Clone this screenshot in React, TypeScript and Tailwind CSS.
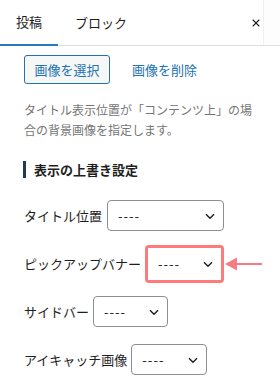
import { X } from "lucide-react";

const Chevron = () => (
  <svg width="12" height="12" viewBox="0 0 12 12" fill="none" stroke="#1e1e1e" strokeWidth="1.4">
    <path d="M2 4.2 L6 8.2 L10 4.2" />
  </svg>
);

const Select = ({ width, bordered = true }: { width: string; bordered?: boolean }) => (
  <div
    className={`${width} ${
      bordered ? "h-[31px] border border-[#8c8f94] rounded-[4px]" : "h-[32px]"
    } flex items-center justify-between pl-[10px] pr-[7px] bg-white`}
  >
    <span className="text-[13px] text-[#1e1e1e] tracking-[1px]">----</span>
    <Chevron />
  </div>
);

const App = () => {
  return (
    <div
      className="w-[280px] h-[385px] bg-white overflow-hidden text-[#1e1e1e]"
      style={{ fontFamily: '"Noto Sans CJK JP", "Noto Sans", sans-serif' }}
    >
      {/* Tabs */}
      <div className="flex h-[46px] border-b border-[#e0e0e0]">
        <div className="w-[58px] -mb-px border-b-2 border-[#2a78c0] flex items-center justify-center text-[13px]">
          投稿
        </div>
        <div className="pl-[17px] flex items-center text-[13px]">ブロック</div>
        <div className="flex-1" />
        <div className="w-[14px] flex items-center justify-center">
          <X className="w-[12px] h-[12px]" strokeWidth={2.2} />
        </div>
        <div className="w-[17px] border-l border-[#f0f0f0] bg-[#fdfdfd]" />
      </div>

      <div className="pl-[24px]">
        {/* Image buttons */}
        <div className="flex items-center mt-[9px]">
          <button className="w-[86px] h-[29px] border border-[#2271b1] rounded-[3px] bg-[#f6f7f7] text-[13px] text-[#2271b1]">
            画像を選択
          </button>
          <span className="ml-[22px] text-[13px] text-[#2271b1]">画像を削除</span>
        </div>

        {/* Description */}
        <p className="mt-[16px] w-[245px] text-[12px] leading-[20px] text-[#757575]">
          タイトル表示位置が「コンテンツ上」の場
          <br />
          合の背景画像を指定します。
        </p>

        {/* Heading */}
        <div className="mt-[21px] -ml-px border-l-[3px] border-[#1d3b52] pl-[8px] h-[17px] flex items-center text-[13px] font-bold">
          表示の上書き設定
        </div>

        {/* Override rows */}
        <div className="mt-[22px] flex items-center gap-[5px] text-[13px]">
          <span>タイトル位置</span>
          <Select width="w-[117px]" />
        </div>

        <div className="mt-[14px] flex items-center text-[13px]">
          <span>ピックアップバナー</span>
          <div className="ml-[4px] border-[3px] border-[#ff7b7b] rounded-[4px]">
            <Select width="w-[73px]" bordered={false} />
          </div>
          <svg width="38" height="16" viewBox="0 0 38 16" className="ml-[1px]">
            <path d="M0 8 L12 1.5 L12 14.5 Z" fill="#f77b84" />
            <rect x="10" y="7" width="27" height="2" fill="#f77b84" />
          </svg>
        </div>

        <div className="mt-[13px] flex items-center gap-[4px] text-[13px]">
          <span>サイドバー</span>
          <Select width="w-[75px]" />
        </div>

        <div className="mt-[17px] flex items-center gap-[4px] text-[13px]">
          <span>アイキャッチ画像</span>
          <Select width="w-[76px]" />
        </div>
      </div>
    </div>
  );
};

export default App;
